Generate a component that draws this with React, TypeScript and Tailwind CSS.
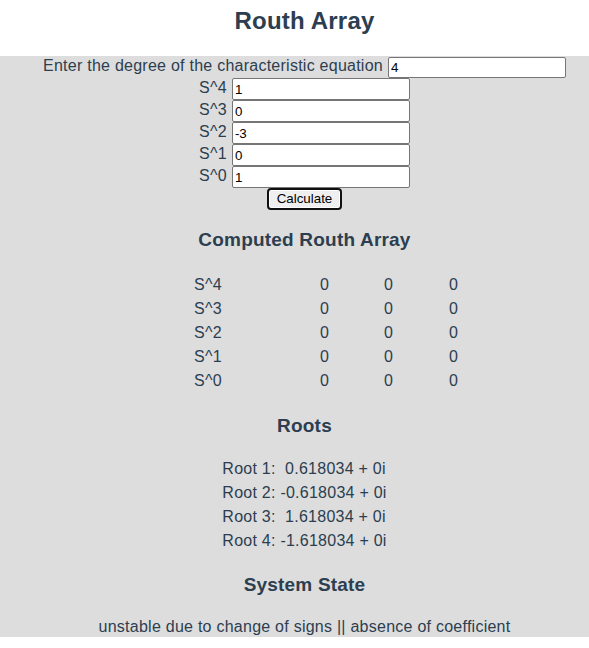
import { useState } from 'react';

const powers = ['S^4', 'S^3', 'S^2', 'S^1', 'S^0'];
const roots = ['0.618034', '-0.618034', '1.618034', '-1.618034'];

export default function App() {
  const [degree, setDegree] = useState('4');
  const [coeffs, setCoeffs] = useState(['1', '0', '-3', '0', '1']);

  const inputClasses =
    'w-[178px] rounded-[2px] border border-[#767676] bg-white px-[2px] text-[13.33px] tracking-normal text-black outline-none';

  const updateCoeff = (i: number, value: string) => {
    setCoeffs((prev) => prev.map((c, j) => (j === i ? value : c)));
  };

  return (
    <div className="min-h-screen bg-white font-['Liberation_Sans',Arial,sans-serif] text-[#2c3e50]">
      <header className="h-[56px] pl-[20px] pt-[7px] text-center">
        <h1 className="text-[24px] font-bold leading-[28px] tracking-[0.2px]">Routh Array</h1>
      </header>

      <main className="bg-[#dddddd] pb-[1.5px] pl-[20px] text-[16px] tracking-[0.25px]">
        <div className="flex h-[22px] items-start justify-center gap-[5px]">
          <span className="leading-[20px]">Enter the degree of the characteristic equation</span>
          <input
            value={degree}
            onChange={(e) => setDegree(e.target.value)}
            className={`${inputClasses} mt-[1px] h-[21px]`}
          />
        </div>

        {/* coefficient inputs */}
        {powers.map((p, i) => (
          <div key={p} className="flex h-[22px] items-start justify-center gap-[5px]">
            <span className="leading-[20px]">{p}</span>
            <input
              value={coeffs[i]}
              onChange={(e) => updateCoeff(i, e.target.value)}
              className={`${inputClasses} h-[22px]`}
            />
          </div>
        ))}

        <div className="flex justify-center">
          <button className="h-[22px] w-[75px] rounded-[4px] border-2 border-[#101010] bg-[#efefef] text-[13.33px] leading-[16px] tracking-normal text-black shadow-[inset_0_0_0_1px_#ffffff]">
            Calculate
          </button>
        </div>

        <h3 className="mt-[19px] text-center text-[19px] font-bold leading-[22px] tracking-[0.2px]">
          Computed Routh Array
        </h3>

        <div className="ml-[174px] mt-[22px] grid grid-cols-[126px_64px_65px_20px] leading-[24px]">
          {powers.map((p) => (
            <div key={p} className="contents">
              <span>{p}</span>
              <span>0</span>
              <span>0</span>
              <span>0</span>
            </div>
          ))}
        </div>

        <h3 className="mt-[22px] text-center text-[19px] font-bold leading-[22px] tracking-[0.2px]">Roots</h3>

        <div className="mx-auto mt-[19.5px] flex w-fit flex-col leading-[24px]">
          {roots.map((r, i) => (
            <span key={i} className="whitespace-pre">
              {`Root ${i + 1}:${r.startsWith('-') ? ' ' : '  '}${r} + 0i`}
            </span>
          ))}
        </div>

        <h3 className="mt-[21.5px] text-center text-[19px] font-bold leading-[22px] tracking-[0.2px]">
          System State
        </h3>

        <p className="mt-[21.5px] text-center leading-[18px]">
          unstable due to change of signs || absence of coefficient
        </p>
      </main>
    </div>
  );
}
